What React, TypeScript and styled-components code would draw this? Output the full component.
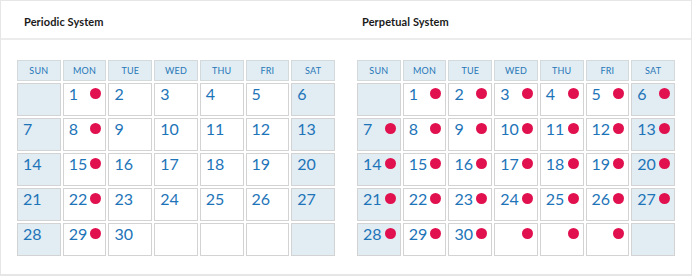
import styled, { createGlobalStyle } from "styled-components";

const GlobalStyle = createGlobalStyle`
  body {
    margin: 0;
    background: #ffffff;
    font-family: "Lato", "Open Sans", Arial, sans-serif;
  }
`;

const Card = styled.div`
  width: 692px;
  height: 276px;
  box-sizing: border-box;
  border: 1px solid #e6e6e6;
  border-bottom-width: 2px;
  background: #fff;
`;

const TitleBar = styled.div`
  height: 39px;
  box-sizing: border-box;
  padding: 3px 0 0 16px;
  border-bottom: 2px solid #ececec;
  display: grid;
  grid-template-columns: 318px 318px;
  column-gap: 22px;
  align-items: center;
`;

const Title = styled.h3<{ $indent: number }>`
  margin: 0;
  padding-left: ${(p) => p.$indent}px;
  font-family: "Lato", Arial, sans-serif;
  font-weight: 700;
  font-size: 11px;
  color: #1a1a1a;
  letter-spacing: 0.1px;
`;

const Body = styled.div`
  display: grid;
  grid-template-columns: 318px 318px;
  column-gap: 22px;
  padding: 20px 0 0 16px;
`;

const Grid = styled.div`
  display: grid;
  grid-template-columns: repeat(7, 1fr);
  grid-template-rows: 21px repeat(5, 33px);
  gap: 2px 2px;
`;

const DayName = styled.div`
  box-sizing: border-box;
  border: 1px solid #d4d9dc;
  background: #e1ecf3;
  color: #2677b7;
  font-size: 9px;
  letter-spacing: 0.2px;
  display: flex;
  align-items: center;
  justify-content: center;
`;

const Cell = styled.div<{ $weekend: boolean }>`
  box-sizing: border-box;
  border: 1px solid #d3d3d3;
  background: ${(p) => (p.$weekend ? "#e1ecf3" : "#ffffff")};
  display: flex;
  align-items: flex-start;
  padding: 2px 4px 0 5px;
`;

const Num = styled.span`
  font-size: 16px;
  line-height: 16px;
  color: #1d74b8;
`;

const Dot = styled.span`
  margin-left: auto;
  margin-top: 2px;
  width: 11px;
  height: 11px;
  border-radius: 50%;
  background: #e1104e;
  flex-shrink: 0;
`;

const days = ["SUN", "MON", "TUE", "WED", "THU", "FRI", "SAT"];

const weeks: (number | null)[][] = [
  [null, 1, 2, 3, 4, 5, 6],
  [7, 8, 9, 10, 11, 12, 13],
  [14, 15, 16, 17, 18, 19, 20],
  [21, 22, 23, 24, 25, 26, 27],
  [28, 29, 30, null, null, null, null],
];

type Mode = "periodic" | "perpetual";

function hasDot(mode: Mode, day: number | null, col: number) {
  if (mode === "periodic") return col === 1 && day !== null;
  if (day !== null) return true;
  return col >= 3 && col <= 5;
}

function Calendar({ mode }: { mode: Mode }) {
  return (
    <Grid>
      {days.map((d) => (
        <DayName key={d}>{d}</DayName>
      ))}
      {weeks.map((week, r) =>
        week.map((day, c) => (
          <Cell key={r + "-" + c} $weekend={c === 0 || c === 6}>
            {day !== null && <Num>{day}</Num>}
            {hasDot(mode, day, c) && <Dot />}
          </Cell>
        ))
      )}
    </Grid>
  );
}

export default function App() {
  return (
    <>
      <GlobalStyle />
      <Card>
        <TitleBar>
          <Title $indent={7}>Periodic System</Title>
          <Title $indent={5}>Perpetual System</Title>
        </TitleBar>
        <Body>
          <Calendar mode="periodic" />
          <Calendar mode="perpetual" />
        </Body>
      </Card>
    </>
  );
}
